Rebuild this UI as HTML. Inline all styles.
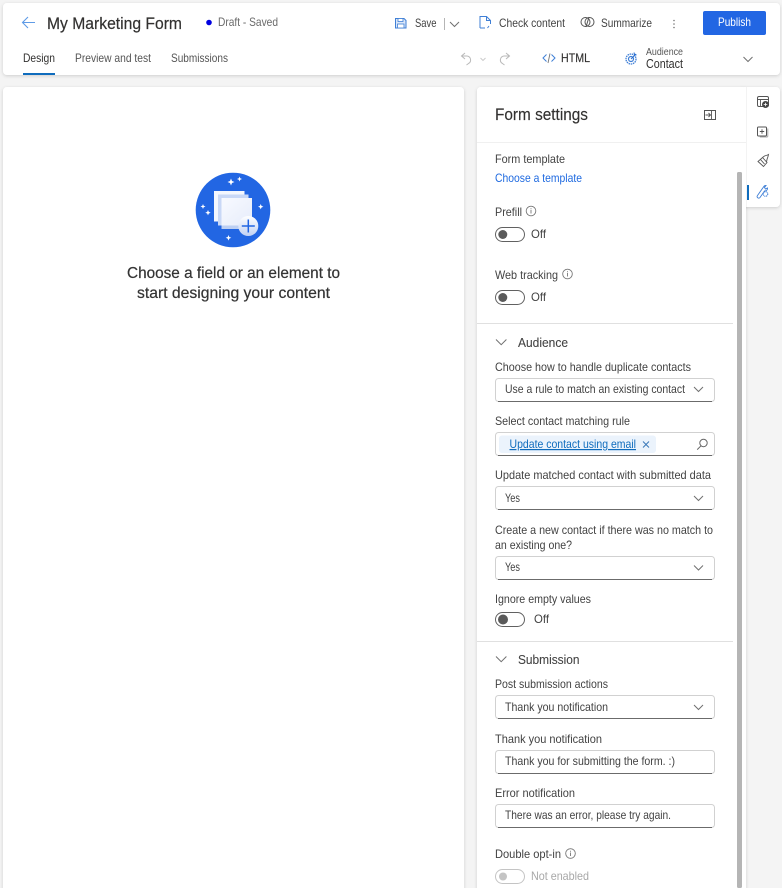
<!DOCTYPE html>
<html lang="en">
<head>
<meta charset="utf-8">
<title>My Marketing Form</title>
<style>
html,body{margin:0;padding:0;width:782px;height:888px;overflow:hidden;background:#f4f4f4}
svg{display:block;font-family:"Liberation Sans",sans-serif}
text{fill:#424242;font-size:12px}
.i{fill:none;stroke:#555;stroke-width:1}
.b{fill:none;stroke:#3f7fd6;stroke-width:1}
.f{fill:#fff;stroke:#d1d1d1;stroke-width:1}
.u{stroke:#6b6b6b;stroke-width:1}
.c{fill:none;stroke:#707070;stroke-width:1}
</style>
</head>
<body>
<svg width="782" height="888" viewBox="0 0 782 888" xmlns="http://www.w3.org/2000/svg">
<defs>
<filter id="s" x="-5%" y="-5%" width="110%" height="110%"><feDropShadow dx="0" dy="1" stdDeviation="1.5" flood-color="#000" flood-opacity=".16"/></filter>
<linearGradient id="pg" x1="0" y1="0" x2="1" y2="1"><stop offset="0" stop-color="#f8faff"/><stop offset="1" stop-color="#e6ecfa"/></linearGradient>
<linearGradient id="pl" x1="0" y1="0" x2="0" y2="1"><stop offset="0" stop-color="#fff"/><stop offset="1" stop-color="#c0d1f4"/></linearGradient>
</defs>

<!-- cards -->
<rect x="3" y="3" width="777" height="72" rx="4" fill="#fff" filter="url(#s)"/>
<rect x="3" y="87" width="461" height="810" rx="4" fill="#fff" filter="url(#s)"/>
<rect x="477" y="87" width="269" height="810" rx="4" fill="#fff" filter="url(#s)"/>
<rect x="740" y="87" width="40" height="120" rx="4" fill="#fff" filter="url(#s)"/>
<rect x="477" y="87" width="269" height="810" rx="4" fill="#fff"/>
<rect x="746" y="87" width="1" height="120" fill="#f3f3f3"/>

<!-- header row 1 -->
<path d="M35 22.500H23M28 17l-5.500 5.500L28 28" fill="none" stroke="#5f9be6" stroke-width="1.100"/>
<text x="47" y="29" lengthAdjust="spacingAndGlyphs" textLength="135" stroke="#323130" stroke-width=".2" style="font-size:17px;fill:#323130">My Marketing Form</text>
<circle cx="209" cy="22.500" r="2.800" fill="#0000e0"/>
<text x="218" y="26" lengthAdjust="spacingAndGlyphs" textLength="60" style="fill:#6a6a6a">Draft - Saved</text>

<path d="M395.500 18.500h8.500l2 2v7.500h-10.500z" fill="#dbe7f9" stroke="#3f7fd6"/><rect x="398" y="18.500" width="5" height="3" fill="#fff" stroke="#3f7fd6" stroke-width=".8"/><rect x="397.500" y="24" width="6.500" height="4" fill="#fff" stroke="#3f7fd6" stroke-width=".8"/>
<text x="415" y="27" lengthAdjust="spacingAndGlyphs" textLength="21.500">Save</text>
<path d="M444.500 18v12" stroke="#b5b5b5"/>
<path d="M450 22l4.500 4.500L459 22" class="c"/>
<path d="M480 28V16.500h6.500l4 4V24M486.500 16.500v4h4M480 28h5M489 26l-1.500 2" class="b"/>
<text x="499" y="27" lengthAdjust="spacingAndGlyphs" textLength="66">Check content</text>
<circle cx="585.500" cy="22" r="4.500" class="i"/><circle cx="589.500" cy="22" r="4.500" class="i"/><path d="M586 27l3-10" class="i"/>
<text x="601" y="27" lengthAdjust="spacingAndGlyphs" textLength="51">Summarize</text>
<circle cx="674" cy="20.500" r=".8" fill="#777"/><circle cx="674" cy="24" r=".8" fill="#777"/><circle cx="674" cy="27.500" r=".8" fill="#777"/>
<rect x="703" y="11" width="63" height="24" rx="2" fill="#2266e3"/>
<text x="718" y="26" lengthAdjust="spacingAndGlyphs" textLength="33" style="fill:#fff">Publish</text>

<!-- header row 2 -->
<text x="23" y="62" lengthAdjust="spacingAndGlyphs" textLength="32" style="fill:#323130">Design</text>
<rect x="23" y="73" width="32" height="2" fill="#0f6cbd"/>
<text x="75" y="62" lengthAdjust="spacingAndGlyphs" textLength="76" style="fill:#555">Preview and test</text>
<text x="171" y="62" lengthAdjust="spacingAndGlyphs" textLength="57" style="fill:#555">Submissions</text>

<path d="M465 53l-3.500 3 3.500 3M461.500 56h5.500a4 4 0 0 1 1.500 7.500l-2 1.500" fill="none" stroke="#b9b9b9"/>
<path d="M480.500 58l2.500 2.500 2.500-2.500" fill="none" stroke="#c8c8c8" stroke-width=".9"/>
<path d="M506 53l3.500 3-3.500 3M509.500 56H504a4 4 0 0 0-1.500 7.500l2 1.500" fill="none" stroke="#b9b9b9"/>

<path d="M546.500 54.500l-3.500 3.500 3.500 3.500M551.500 54.500l3.500 3.500-3.500 3.500" class="b"/><path d="M550 53.500l-2 9.500" fill="none" stroke="#777" stroke-width=".9"/>
<text x="561" y="62" lengthAdjust="spacingAndGlyphs" textLength="29" stroke="#323130" stroke-width=".15" style="fill:#323130">HTML</text>
<circle cx="631" cy="59" r="5" fill="none" stroke="#3f7fd6" stroke-width="1.300" stroke-dasharray="1.500 .7"/><circle cx="631" cy="59" r="2.500" fill="none" stroke="#3f7fd6" stroke-width="1.200"/><path d="M631 59l5-5M634 52.500l.5 2 2 .5" stroke="#2b6fd0" fill="none"/>
<text x="646" y="55" lengthAdjust="spacingAndGlyphs" textLength="37" style="font-size:10px;fill:#555">Audience</text>
<text x="646" y="68" lengthAdjust="spacingAndGlyphs" textLength="37" style="fill:#323130;font-size:12.500px">Contact</text>
<path d="M743.500 57l4.500 4.500 4.500-4.500" class="c"/>

<!-- empty state -->
<circle cx="233" cy="210" r="37.300" fill="#2266e3"/>
<rect x="214" y="191" width="30.500" height="30.500" fill="#f4f7fe"/>
<rect x="218" y="194.500" width="30.500" height="31" fill="#c9d8f6"/>
<rect x="221.500" y="198" width="30.500" height="31" fill="#bccff3"/>
<rect x="221.500" y="198" width="30.500" height="27.500" fill="url(#pg)"/>
<circle cx="248.300" cy="226" r="10" fill="url(#pl)"/>
<path d="M248.300 219.500v13M241.800 226h13" stroke="#2266e3" stroke-width="1.500"/>
<path d="M231 178.500l1 2.500 2.500 1-2.500 1-1 2.500-1-2.500-2.500-1 2.500-1zM239.500 176.500l.7 1.800 1.800.7-1.800.7-.7 1.800-.7-1.800-1.800-.7 1.800-.7zM203 204l.7 1.800 1.800.7-1.800.7-.7 1.800-.7-1.800-1.800-.7 1.800-.7zM208 210l.8 1.900 1.900.8-1.900.8-.8 1.900-.8-1.900-1.900-.8 1.900-.8zM260.700 204l.8 1.900 1.900.8-1.900.8-.8 1.900-.8-1.900-1.900-.8 1.900-.8zM228.500 235l.8 2 2 .8-2 .8-.8 2-.8-2-2-.8 2-.8z" fill="#fff"/>
<text x="127" y="278" lengthAdjust="spacingAndGlyphs" textLength="213" stroke="#333" stroke-width=".2" style="font-size:15.500px;fill:#333">Choose a field or an element to</text>
<text x="137" y="298" lengthAdjust="spacingAndGlyphs" textLength="193" stroke="#333" stroke-width=".2" style="font-size:15.500px;fill:#333">start designing your content</text>

<!-- panel header -->
<text x="495" y="120" lengthAdjust="spacingAndGlyphs" textLength="93" stroke="#323130" stroke-width=".15" style="font-size:17px;fill:#323130">Form settings</text>
<rect x="704.500" y="110.500" width="11" height="9" fill="none" stroke="#555"/><path d="M711.500 110.500v9M705.500 115h4.500M708.500 113l2 2-2 2" fill="none" stroke="#555" stroke-width=".9"/>
<rect x="477" y="142" width="269" height="1" fill="#f0f0f0"/>

<!-- scrollbar -->
<rect x="737" y="172" width="5" height="716" rx="1.500" fill="#b5b5b5"/>

<!-- settings top -->
<text x="495" y="163" lengthAdjust="spacingAndGlyphs" textLength="70">Form template</text>
<text x="495" y="182" lengthAdjust="spacingAndGlyphs" textLength="87" style="fill:#1f6ae0">Choose a template</text>
<text x="495" y="216" lengthAdjust="spacingAndGlyphs" textLength="27">Prefill</text>
<circle cx="531" cy="211" r="4.800" fill="none" stroke="#777" stroke-width=".9"/><path d="M531 210v3.500M531 208.300v.9" stroke="#777" stroke-width=".9"/>
<rect x="495.500" y="227.500" width="29" height="14" rx="7" fill="#fff" stroke="#616161"/><circle cx="502.800" cy="234.500" r="4.500" fill="#5a5a5a"/>
<text x="531" y="238" lengthAdjust="spacingAndGlyphs" textLength="15">Off</text>
<text x="495" y="279" lengthAdjust="spacingAndGlyphs" textLength="63">Web tracking</text>
<circle cx="567.500" cy="274" r="4.800" fill="none" stroke="#777" stroke-width=".9"/><path d="M567.500 273v3.500M567.500 271.300v.9" stroke="#777" stroke-width=".9"/>
<rect x="495.500" y="290.500" width="29" height="14" rx="7" fill="#fff" stroke="#616161"/><circle cx="502.800" cy="297.500" r="4.500" fill="#5a5a5a"/>
<text x="531" y="301" lengthAdjust="spacingAndGlyphs" textLength="15">Off</text>

<!-- audience -->
<rect x="477" y="323" width="256" height="1" fill="#e0e0e0"/>
<path d="M496 339.500l5.200 5.200 5.200-5.200" class="c"/>
<text x="518" y="347" lengthAdjust="spacingAndGlyphs" textLength="50" stroke="#444" stroke-width=".1" style="font-size:13px;fill:#444">Audience</text>
<text x="495" y="371" lengthAdjust="spacingAndGlyphs" textLength="196">Choose how to handle duplicate contacts</text>
<rect x="495.500" y="378.500" width="219" height="23" rx="3" class="f"/><path d="M498 401.500h214" class="u"/>
<text x="505" y="393" lengthAdjust="spacingAndGlyphs" textLength="180">Use a rule to match an existing contact</text>
<path d="M694 387l4.500 4.500 4.500-4.500" class="c"/>

<text x="495" y="425" lengthAdjust="spacingAndGlyphs" textLength="135">Select contact matching rule</text>
<rect x="495.500" y="432.500" width="219" height="23" rx="3" class="f"/><path d="M498 455.500h214" class="u"/>
<rect x="499" y="435.500" width="157" height="17.500" rx="3" fill="#ebf3fc"/>
<text x="509.500" y="448" lengthAdjust="spacingAndGlyphs" textLength="126.500" text-decoration="underline" style="fill:#0f6cbd">Update contact using email</text>
<path d="M643 441.500l6 6M649 441.500l-6 6" fill="none" stroke="#3a78b8"/>
<circle cx="703.500" cy="443" r="3.700" fill="none" stroke="#666"/><path d="M701 445.800l-3.800 3.800" stroke="#666"/>

<text x="495" y="479" lengthAdjust="spacingAndGlyphs" textLength="216">Update matched contact with submitted data</text>
<rect x="495.500" y="486.500" width="219" height="23" rx="3" class="f"/><path d="M498 509.500h214" class="u"/>
<text x="505" y="502" lengthAdjust="spacingAndGlyphs" textLength="15">Yes</text>
<path d="M694 496l4.500 4.500 4.500-4.500" class="c"/>

<text x="495" y="534" lengthAdjust="spacingAndGlyphs" textLength="218">Create a new contact if there was no match to</text>
<text x="495" y="549" lengthAdjust="spacingAndGlyphs" textLength="77">an existing one?</text>
<rect x="495.500" y="556.500" width="219" height="23" rx="3" class="f"/><path d="M498 579.500h214" class="u"/>
<text x="505" y="571" lengthAdjust="spacingAndGlyphs" textLength="15">Yes</text>
<path d="M694 565.500l4.500 4.500 4.500-4.500" class="c"/>

<text x="495" y="603" lengthAdjust="spacingAndGlyphs" textLength="96">Ignore empty values</text>
<rect x="495.500" y="612.500" width="29" height="14" rx="7" fill="#fff" stroke="#616161"/><circle cx="503" cy="619.500" r="5" fill="#5a5a5a"/>
<text x="534" y="623" lengthAdjust="spacingAndGlyphs" textLength="15">Off</text>

<!-- submission -->
<rect x="477" y="641" width="256" height="1" fill="#e0e0e0"/>
<path d="M496 656.500l5.200 5.200 5.200-5.200" class="c"/>
<text x="518" y="664" lengthAdjust="spacingAndGlyphs" textLength="61.500" stroke="#444" stroke-width=".1" style="font-size:13px;fill:#444">Submission</text>
<text x="495" y="688" lengthAdjust="spacingAndGlyphs" textLength="113">Post submission actions</text>
<rect x="495.500" y="695.500" width="219" height="23" rx="3" class="f"/><path d="M498 718.500h214" class="u"/>
<text x="505" y="711" lengthAdjust="spacingAndGlyphs" textLength="103">Thank you notification</text>
<path d="M694 705l4.500 4.500 4.500-4.500" class="c"/>

<text x="495" y="743" lengthAdjust="spacingAndGlyphs" textLength="107">Thank you notification</text>
<rect x="495.500" y="750.500" width="219" height="23" rx="3" class="f"/><path d="M498 773.500h214" class="u"/>
<text x="505" y="765" lengthAdjust="spacingAndGlyphs" textLength="170">Thank you for submitting the form. :)</text>

<text x="495" y="797" lengthAdjust="spacingAndGlyphs" textLength="80">Error notification</text>
<rect x="495.500" y="804.500" width="219" height="23" rx="3" class="f"/><path d="M498 827.500h214" class="u"/>
<text x="505" y="819" lengthAdjust="spacingAndGlyphs" textLength="166">There was an error, please try again.</text>

<text x="495" y="858" lengthAdjust="spacingAndGlyphs" textLength="66">Double opt-in</text>
<circle cx="570.500" cy="853.500" r="4.800" fill="none" stroke="#777" stroke-width=".9"/><path d="M570.500 852.500v3.500M570.500 850.800v.9" stroke="#777" stroke-width=".9"/>
<rect x="495.500" y="869.500" width="29" height="14" rx="7" fill="#fff" stroke="#c4c4c4"/><circle cx="503" cy="876.500" r="4" fill="#c4c4c4"/>
<text x="531" y="880" lengthAdjust="spacingAndGlyphs" textLength="58" style="fill:#a8a8a8">Not enabled</text>

<!-- rail -->
<rect x="757.500" y="96.500" width="11" height="10" rx="1.500" fill="none" stroke="#555"/><path d="M757.500 99.500h11M760.500 99.500v7" stroke="#555" stroke-width=".9"/><circle cx="765.500" cy="104.500" r="3.500" fill="#444"/><path d="M765.500 102.700v3.600M763.700 104.500h3.600" stroke="#fff" stroke-width=".8"/>
<rect x="757.500" y="127" width="9" height="9" rx="1" fill="#fff" stroke="#555"/><path d="M762 129.300v4.400M759.800 131.500h4.400" stroke="#555" stroke-width=".9"/><path d="M767.800 128.500v7.500a1 1 0 0 1-1 1h-7" fill="none" stroke="#aaa"/>
<path d="M758 161.500l5.500 5 3.500-4-4.500-5zM762.500 157.500l2-1.500 3-1 1-.5-.5 2-1 3-.5 2.500M760.500 159.500l4 4.500" fill="none" stroke="#555" stroke-width=".9"/>
<rect x="747" y="185" width="2" height="15" fill="#0f6cbd"/>
<path d="M757.500 195.500l6-8.500c.5-1 1-1.500 2.500-1.500l-1.500 2 1 1.500 2-1c.2 1.800-1 3-3 3l-4.500 6.500a1.500 1.500 0 0 1-2.500-2z" fill="none" stroke="#3f7fd6" stroke-width=".9"/><circle cx="765.500" cy="194" r="2.300" fill="#fff" stroke="#3f7fd6" stroke-dasharray="1.200 .6"/>
</svg>
</body>
</html>
